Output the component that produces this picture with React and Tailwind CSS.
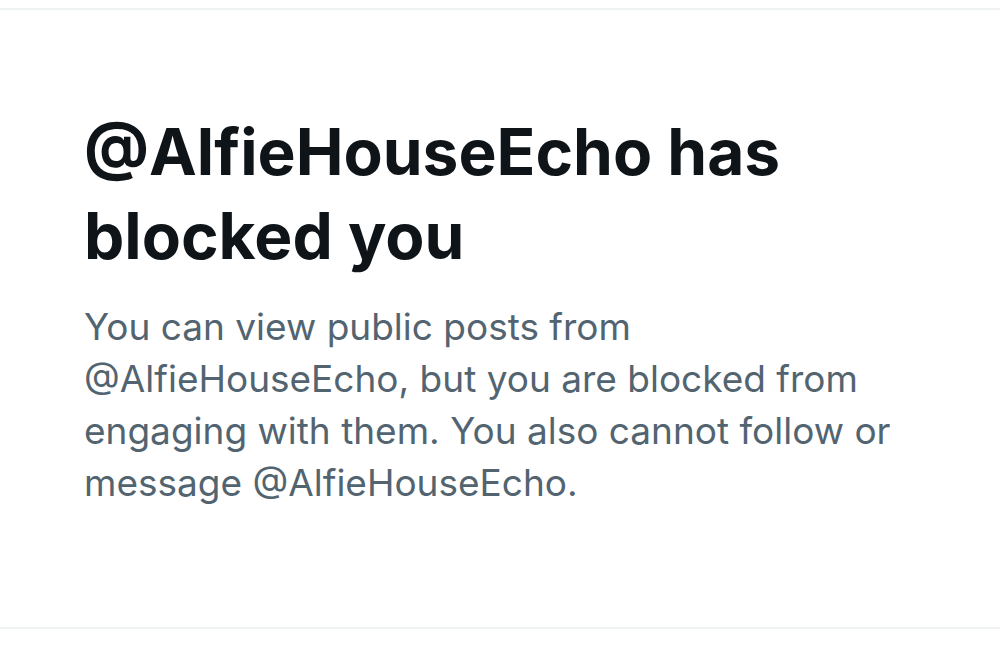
export default function App() {
  return (
    <div className="h-[650px] w-[1000px] bg-white pt-2 font-['Inter',sans-serif]">
      <div className="flex h-[621px] flex-col border-y-2 border-[#eff3f4] pl-[84px] pr-[84px] pt-[100px]">
        <h1 className="text-[64px] font-bold leading-[84px] text-[#0f1419]">
          @AlfieHouseEcho has blocked you
        </h1>
        <p className="mt-[23px] text-[37px] leading-[52px] text-[#536471]">
          You can view public posts from @AlfieHouseEcho, but you are blocked from engaging with them. You also cannot follow or message @AlfieHouseEcho.
        </p>
      </div>
    </div>
  );
}
